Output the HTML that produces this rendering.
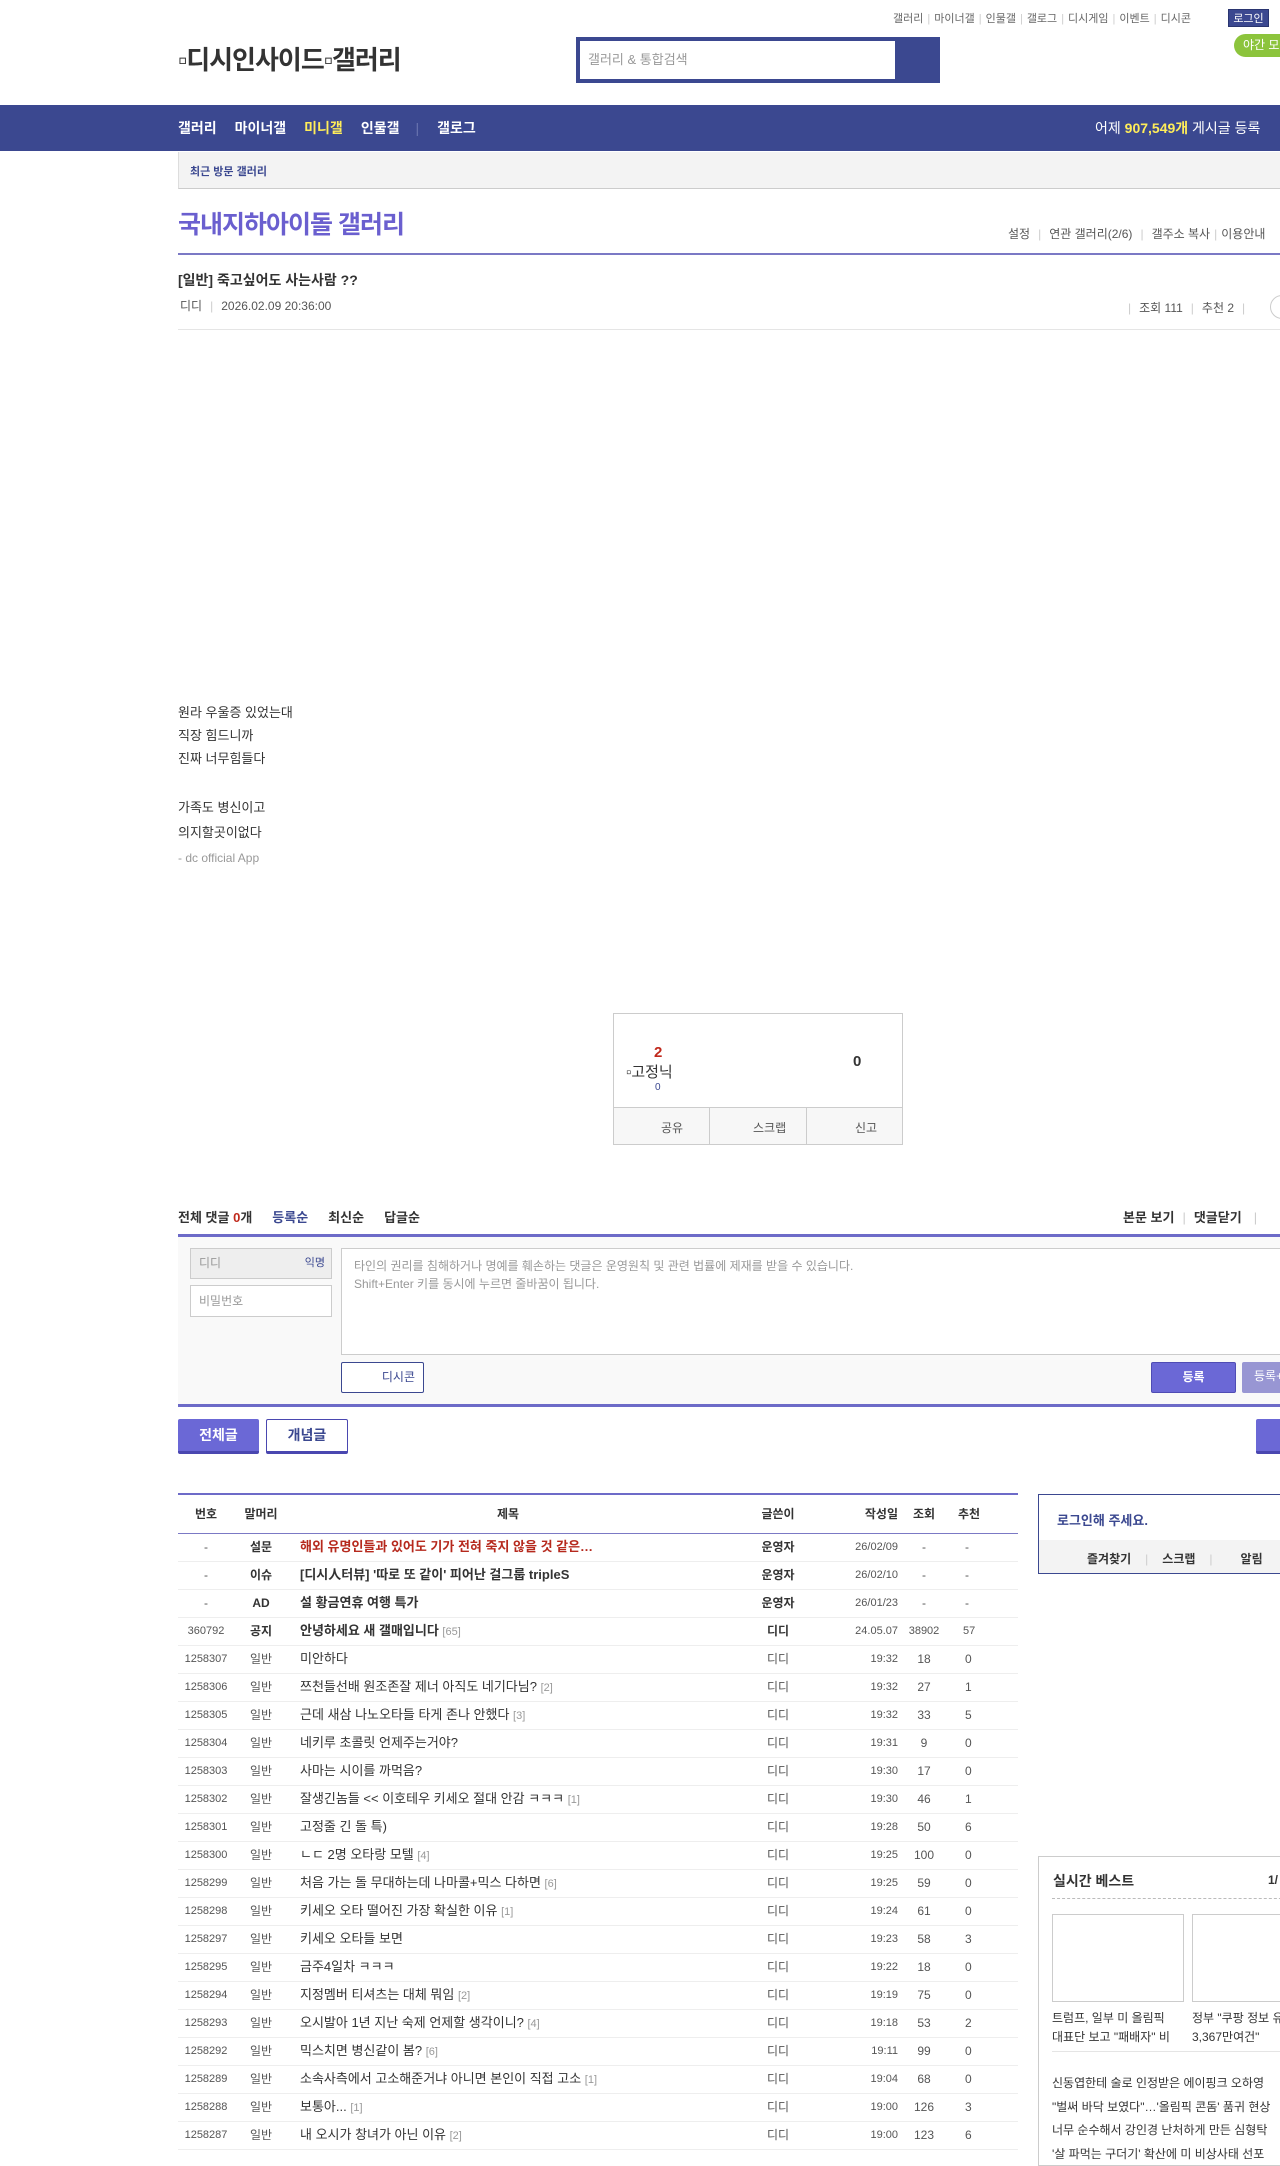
<!DOCTYPE html>
<html><head><meta charset="utf-8">
<style>
*{margin:0;padding:0;box-sizing:border-box}
body{width:1280px;height:2157px;overflow:hidden;position:relative;background:#fff;font-family:"Liberation Sans","Noto Sans CJK KR",sans-serif;color:#333;font-size:13px}
.a{position:absolute;white-space:nowrap}
.sep{color:#ccc;margin:0 4px}
table{border-collapse:collapse}
.lt td{height:28px;border-bottom:1px solid #eee;font-size:12px;text-align:center;color:#555;vertical-align:middle;line-height:16px;padding:0}
.lt td.t{text-align:left;padding-left:12px;font-size:13px;color:#333}
.lt .rp{color:#999;font-size:11px}
.lt td.n{font-size:11px}
.lt td.d{font-size:11px;text-align:right}
.lt td.r{text-align:left;padding-left:15px}
</style></head><body>

<div class="a" style="left:893px;top:10px;font-size:11px;color:#666">갤러리<span class="sep">|</span>마이너갤<span class="sep">|</span>인물갤<span class="sep">|</span>갤로그<span class="sep">|</span>디시게임<span class="sep">|</span>이벤트<span class="sep">|</span>디시콘</div>
<div class="a" style="left:1228px;top:9px;width:41px;height:18px;background:#3b4890;color:#fff;font-size:11px;text-align:center;line-height:18px;border:1px solid #2a3570">로그인</div>
<div class="a" style="left:1234px;top:34px;width:60px;height:23px;background:#8cc43c;border-radius:12px;color:#fff;font-size:12px;line-height:23px;padding-left:9px">야간 모드</div>

<div class="a" style="left:178px;top:40px;font-size:26px;color:#333;font-weight:bold;letter-spacing:-1px">▫디시인사이드▫갤러리</div>

<div class="a" style="left:576px;top:37px;width:364px;height:46px;background:#3b4890"></div>
<div class="a" style="left:580px;top:41px;width:315px;height:38px;background:#fff;font-size:13px;color:#999;line-height:38px;padding-left:8px">갤러리 &amp; 통합검색</div>

<div class="a" style="left:0;top:105px;width:1280px;height:46px;background:#3b4890"></div>
<div class="a" style="left:178px;top:119px;font-size:14px;font-weight:bold;color:#fff;line-height:18px">갤러리<span style="margin-left:18px">마이너갤</span><span style="margin-left:18px;color:#ffed59">미니갤</span><span style="margin-left:18px">인물갤</span><span style="margin-left:16px;color:#6a74b0;font-weight:normal">|</span><span style="margin-left:18px">갤로그</span></div>
<div class="a" style="left:1095px;top:119px;font-size:14px;color:#fff;line-height:18px">어제 <b style="color:#ffed59">907,549개</b> 게시글 등록</div>

<div class="a" style="left:178px;top:152px;width:1102px;height:37px;background:#f3f3f3;border-left:1px solid #ddd;border-bottom:1px solid #ccc"></div>
<div class="a" style="left:190px;top:163px;font-size:11px;color:#3b4890;font-weight:bold">최근 방문 갤러리</div>

<div class="a" style="left:178px;top:205px;font-size:25px;color:#6a5fcf;font-weight:bold;letter-spacing:-1px">국내지하아이돌 갤러리</div>
<div class="a" style="left:1008px;top:225px;font-size:12px;color:#555">설정<span class="sep" style="margin:0 8px">|</span>연관 갤러리(2/6)<span class="sep" style="margin:0 8px">|</span>갤주소 복사<span class="sep">|</span>이용안내</div>
<div class="a" style="left:178px;top:253px;width:1102px;height:2px;background:#7b79c5"></div>

<div class="a" style="left:178px;top:270px;font-size:14px;font-weight:bold;color:#333">[일반] 죽고싶어도 사는사람 ??</div>
<div class="a" style="left:180px;top:297px;font-size:12px;color:#555">디디<span class="sep" style="margin:0 8px">|</span>2026.02.09 20:36:00</div>
<div class="a" style="left:1128px;top:299px;font-size:12px;color:#555"><span class="sep" style="margin:0 8px 0 0">|</span>조회 111<span class="sep" style="margin:0 8px">|</span>추천 2<span class="sep" style="margin:0 8px">|</span></div>
<div class="a" style="left:1270px;top:295px;width:24px;height:24px;border:1px solid #ccc;border-radius:12px"></div>
<div class="a" style="left:178px;top:329px;width:1102px;height:1px;background:#e5e5e5"></div>

<div class="a" style="left:178px;top:701px;font-size:13px;color:#333;line-height:23px;white-space:pre">원라 우울증 있었는대
직장 힘드니까
진짜 너무힘들다</div>
<div class="a" style="left:178px;top:795px;font-size:13px;color:#333;line-height:25px;white-space:pre">가족도 병신이고
의지할곳이없다</div>
<div class="a" style="left:178px;top:851px;font-size:12px;color:#999">- dc official App</div>

<div class="a" style="left:613px;top:1013px;width:290px;height:132px;border:1px solid #ccc"></div>
<div class="a" style="left:614px;top:1107px;width:288px;height:37px;background:#f7f7f7;border-top:1px solid #ccc"></div>
<div class="a" style="left:709px;top:1107px;width:1px;height:37px;background:#ccc"></div>
<div class="a" style="left:806px;top:1107px;width:1px;height:37px;background:#ccc"></div>
<div class="a" style="left:654px;top:1044px;font-size:15px;font-weight:bold;color:#c0291c">2</div>
<div class="a" style="left:626px;top:1061px;font-size:15px;color:#333">▫고정닉</div>
<div class="a" style="left:655px;top:1082px;font-size:10px;color:#3b4890">0</div>
<div class="a" style="left:853px;top:1053px;font-size:15px;font-weight:bold;color:#333">0</div>
<div class="a" style="left:661px;top:1119px;font-size:12px;color:#555">공유</div>
<div class="a" style="left:753px;top:1119px;font-size:12px;color:#555">스크랩</div>
<div class="a" style="left:855px;top:1119px;font-size:12px;color:#555">신고</div>

<div class="a" style="left:178px;top:1207px;font-size:13px;font-weight:bold;color:#333">전체 댓글 <span style="color:#c0291c">0</span>개<span style="margin-left:20px;color:#3b4890">등록순</span><span style="margin-left:20px">최신순</span><span style="margin-left:20px">답글순</span></div>
<div class="a" style="left:1123px;top:1207px;font-size:13px;font-weight:bold;color:#333">본문 보기<span class="sep" style="margin:0 8px;font-weight:normal">|</span>댓글닫기<span class="sep" style="margin:0 12px;font-weight:normal">|</span></div>
<div class="a" style="left:178px;top:1234px;width:1102px;height:3px;background:#6d6bc8"></div>
<div class="a" style="left:178px;top:1237px;width:1102px;height:167px;background:#f9f9f9"></div>
<div class="a" style="left:190px;top:1248px;width:142px;height:31px;background:#eee;border:1px solid #ccc;font-size:12px;color:#999;line-height:29px;padding-left:8px">디디<span style="position:absolute;right:6px;color:#3b4890;font-size:11px">익명</span></div>
<div class="a" style="left:190px;top:1285px;width:142px;height:32px;background:#fff;border:1px solid #ccc;font-size:12px;color:#999;line-height:30px;padding-left:8px">비밀번호</div>
<div class="a" style="left:341px;top:1248px;width:945px;height:107px;background:#fff;border:1px solid #ccc;font-size:12px;color:#999;line-height:18px;padding:8px 12px;white-space:pre">타인의 권리를 침해하거나 명예를 훼손하는 댓글은 운영원칙 및 관련 법률에 제재를 받을 수 있습니다.
Shift+Enter 키를 동시에 누르면 줄바꿈이 됩니다.</div>
<div class="a" style="left:341px;top:1362px;width:83px;height:31px;background:#fff;border:1px solid #3b4890;border-radius:2px;font-size:12px;color:#3b4890;line-height:29px;text-align:right;padding-right:8px">디시콘</div>
<div class="a" style="left:1151px;top:1362px;width:85px;height:31px;background:#6b68d6;border:1px solid #4f4cb4;border-radius:2px;color:#fff;font-size:12px;line-height:29px;text-align:center;font-weight:bold">등록</div>
<div class="a" style="left:1242px;top:1362px;width:60px;height:31px;background:#9896d3;border-radius:2px;color:#fff;font-size:12px;line-height:29px;padding-left:12px">등록+추천</div>
<div class="a" style="left:178px;top:1404px;width:1102px;height:3px;background:#6d6bc8"></div>

<div class="a" style="left:178px;top:1419px;width:81px;height:35px;background:#6b68d6;border-bottom:3px solid #4a47b0;border-radius:2px;color:#fff;font-size:14px;font-weight:bold;text-align:center;line-height:32px">전체글</div>
<div class="a" style="left:266px;top:1419px;width:82px;height:35px;background:#fff;border:1px solid #4a47b0;border-bottom:3px solid #4a47b0;border-radius:2px;color:#3b4890;font-size:14px;font-weight:bold;text-align:center;line-height:30px">개념글</div>
<div class="a" style="left:1256px;top:1419px;width:40px;height:35px;background:#6b68d6;border-bottom:3px solid #4a47b0;border-radius:2px"></div>

<div class="a" style="left:178px;top:1493px;width:840px;height:2px;background:#6d6bc8"></div>
<table class="a lt" style="left:178px;top:1495px;width:840px;table-layout:fixed">
<colgroup><col style="width:56px"><col style="width:54px"><col style="width:440px"><col style="width:100px"><col style="width:70px"><col style="width:52px"><col style="width:68px"></colgroup>
<tr><td style="height:38px;border-bottom:1px solid #7b79c5;font-weight:bold;color:#333">번호</td><td style="border-bottom:1px solid #7b79c5;font-weight:bold;color:#333">말머리</td><td style="border-bottom:1px solid #7b79c5;font-weight:bold;color:#333">제목</td><td style="border-bottom:1px solid #7b79c5;font-weight:bold;color:#333">글쓴이</td><td style="border-bottom:1px solid #7b79c5;font-weight:bold;color:#333;text-align:right">작성일</td><td style="border-bottom:1px solid #7b79c5;font-weight:bold;color:#333">조회</td><td style="border-bottom:1px solid #7b79c5;font-weight:bold;color:#333;text-align:left;padding-left:8px">추천</td></tr>
<tr><td>-</td><td><b style="color:#333">설문</b></td><td class="t"><b style="color:#b6291d">해외 유명인들과 있어도 기가 전혀 죽지 않을 것 같은…</b></td><td><b style="color:#333">운영자</b></td><td class="d">26/02/09</td><td>-</td><td class="r">-</td></tr>
<tr><td>-</td><td><b style="color:#333">이슈</b></td><td class="t"><b>[디시人터뷰] '따로 또 같이' 피어난 걸그룹 tripleS</b></td><td><b style="color:#333">운영자</b></td><td class="d">26/02/10</td><td>-</td><td class="r">-</td></tr>
<tr><td>-</td><td><b style="color:#333">AD</b></td><td class="t"><b>설 황금연휴 여행 특가</b></td><td><b style="color:#333">운영자</b></td><td class="d">26/01/23</td><td>-</td><td class="r">-</td></tr>
<tr><td class="n">360792</td><td><b style="color:#333">공지</b></td><td class="t"><b>안녕하세요 새 갤매입니다</b> <span class="rp">[65]</span></td><td><b style="color:#333">디디</b></td><td class="d">24.05.07</td><td class="n">38902</td><td class="r n" style="padding-left:13px">57</td></tr>
<tr><td class="n">1258307</td><td>일반</td><td class="t">미안하다</td><td>디디</td><td class="d">19:32</td><td>18</td><td class="r">0</td></tr>
<tr><td class="n">1258306</td><td>일반</td><td class="t">쯔천들선배 원조존잘 제너 아직도 네기다님? <span class="rp">[2]</span></td><td>디디</td><td class="d">19:32</td><td>27</td><td class="r">1</td></tr>
<tr><td class="n">1258305</td><td>일반</td><td class="t">근데 새삼 나노오타들 타게 존나 안했다 <span class="rp">[3]</span></td><td>디디</td><td class="d">19:32</td><td>33</td><td class="r">5</td></tr>
<tr><td class="n">1258304</td><td>일반</td><td class="t">네키루 초콜릿 언제주는거야?</td><td>디디</td><td class="d">19:31</td><td>9</td><td class="r">0</td></tr>
<tr><td class="n">1258303</td><td>일반</td><td class="t">사마는 시이를 까먹음?</td><td>디디</td><td class="d">19:30</td><td>17</td><td class="r">0</td></tr>
<tr><td class="n">1258302</td><td>일반</td><td class="t">잘생긴놈들 &lt;&lt; 이호테우 키세오 절대 안감 ㅋㅋㅋ <span class="rp">[1]</span></td><td>디디</td><td class="d">19:30</td><td>46</td><td class="r">1</td></tr>
<tr><td class="n">1258301</td><td>일반</td><td class="t">고정줄 긴 돌 특)</td><td>디디</td><td class="d">19:28</td><td>50</td><td class="r">6</td></tr>
<tr><td class="n">1258300</td><td>일반</td><td class="t">ㄴㄷ 2명 오타랑 모텔 <span class="rp">[4]</span></td><td>디디</td><td class="d">19:25</td><td>100</td><td class="r">0</td></tr>
<tr><td class="n">1258299</td><td>일반</td><td class="t">처음 가는 돌 무대하는데 나마콜+믹스 다하면 <span class="rp">[6]</span></td><td>디디</td><td class="d">19:25</td><td>59</td><td class="r">0</td></tr>
<tr><td class="n">1258298</td><td>일반</td><td class="t">키세오 오타 떨어진 가장 확실한 이유 <span class="rp">[1]</span></td><td>디디</td><td class="d">19:24</td><td>61</td><td class="r">0</td></tr>
<tr><td class="n">1258297</td><td>일반</td><td class="t">키세오 오타들 보면</td><td>디디</td><td class="d">19:23</td><td>58</td><td class="r">3</td></tr>
<tr><td class="n">1258295</td><td>일반</td><td class="t">금주4일차 ㅋㅋㅋ</td><td>디디</td><td class="d">19:22</td><td>18</td><td class="r">0</td></tr>
<tr><td class="n">1258294</td><td>일반</td><td class="t">지정멤버 티셔츠는 대체 뭐임 <span class="rp">[2]</span></td><td>디디</td><td class="d">19:19</td><td>75</td><td class="r">0</td></tr>
<tr><td class="n">1258293</td><td>일반</td><td class="t">오시발아 1년 지난 숙제 언제할 생각이니? <span class="rp">[4]</span></td><td>디디</td><td class="d">19:18</td><td>53</td><td class="r">2</td></tr>
<tr><td class="n">1258292</td><td>일반</td><td class="t">믹스치면 병신같이 봄? <span class="rp">[6]</span></td><td>디디</td><td class="d">19:11</td><td>99</td><td class="r">0</td></tr>
<tr><td class="n">1258289</td><td>일반</td><td class="t">소속사측에서 고소해준거냐 아니면 본인이 직접 고소 <span class="rp">[1]</span></td><td>디디</td><td class="d">19:04</td><td>68</td><td class="r">0</td></tr>
<tr><td class="n">1258288</td><td>일반</td><td class="t">보통아... <span class="rp">[1]</span></td><td>디디</td><td class="d">19:00</td><td>126</td><td class="r">3</td></tr>
<tr><td class="n">1258287</td><td>일반</td><td class="t">내 오시가 창녀가 아닌 이유 <span class="rp">[2]</span></td><td>디디</td><td class="d">19:00</td><td>123</td><td class="r">6</td></tr>
</table>

<div class="a" style="left:1038px;top:1494px;width:260px;height:80px;border:1px solid #3b4890"></div>
<div class="a" style="left:1039px;top:1540px;width:250px;height:33px;background:#f3f3f3"></div>
<div class="a" style="left:1057px;top:1510px;font-size:13px;font-weight:bold;color:#3b4890">로그인해 주세요.</div>
<div class="a" style="left:1087px;top:1550px;font-size:12px;font-weight:bold;color:#333">즐겨찾기<span class="sep" style="margin:0 14px;font-weight:normal">|</span>스크랩<span class="sep" style="margin:0 14px;font-weight:normal">|</span><span style="margin-left:14px">알림</span></div>

<div class="a" style="left:1038px;top:1856px;width:260px;height:310px;border:1px solid #ccc"></div>
<div class="a" style="left:1053px;top:1871px;font-size:14px;font-weight:bold;color:#333">실시간 베스트</div>
<div class="a" style="left:1268px;top:1873px;font-size:12px;font-weight:bold;color:#333">1/</div>
<div class="a" style="left:1052px;top:1898px;width:240px;border-top:1px dashed #bbb"></div>
<div class="a" style="left:1052px;top:1914px;width:132px;height:88px;border:1px solid #ccc"></div>
<div class="a" style="left:1192px;top:1914px;width:132px;height:88px;border:1px solid #ccc"></div>
<div class="a" style="left:1052px;top:2009px;font-size:12px;color:#333;line-height:19px;white-space:pre">트럼프, 일부 미 올림픽
대표단 보고 "패배자" 비</div>
<div class="a" style="left:1192px;top:2009px;font-size:12px;color:#333;line-height:19px;white-space:pre">정부 "쿠팡 정보 유출
3,367만여건"</div>
<div class="a" style="left:1052px;top:2051px;width:240px;height:1px;background:#e5e5e5"></div>
<div class="a" style="left:1052px;top:2072px;font-size:12px;color:#333;line-height:23.5px;white-space:pre">신동엽한테 술로 인정받은 에이핑크 오하영
"벌써 바닥 보였다"…'올림픽 콘돔' 품귀 현상
너무 순수해서 강인경 난처하게 만든 심형탁
'살 파먹는 구더기' 확산에 미 비상사태 선포</div>

</body></html>
